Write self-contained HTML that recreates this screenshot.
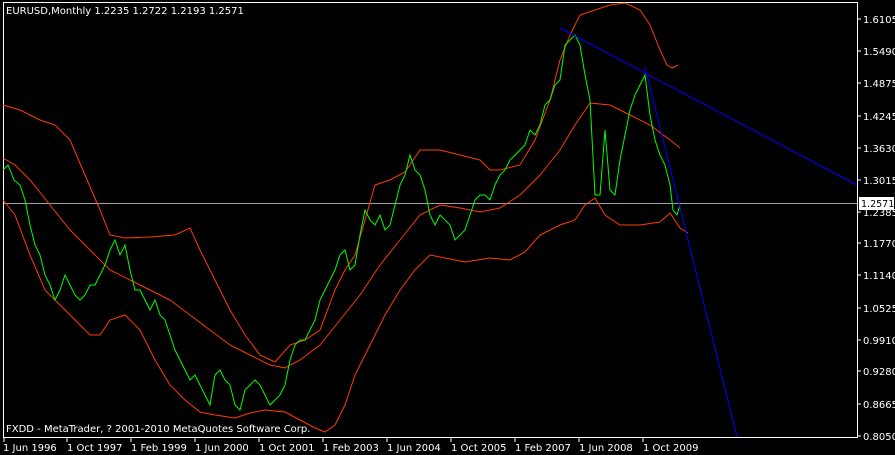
<!DOCTYPE html>
<html><head><style>
body{margin:0;background:#000;width:895px;height:455px;overflow:hidden;font-family:"Liberation Sans",sans-serif}
svg{display:block}
text{font-family:"DejaVu Sans","Liberation Sans",sans-serif;font-size:10px;fill:#fff}
</style></head><body>
<svg width="895" height="455" viewBox="0 0 895 455">
<rect x="3.5" y="2.5" width="854" height="435" fill="none" stroke="#fff"/>
<text x="6" y="14">EURUSD,Monthly  1.2235 1.2722 1.2193 1.2571</text>
<line x1="4" y1="203.5" x2="857" y2="203.5" stroke="#a0a0a8"/>
<g fill="none" stroke="#ff3c00" stroke-width="1">
<polyline points="3,158 15,165 30,180 50,205 70,230 90,250 110,270 130,280 150,290 170,300 190,315 210,330 230,345 250,355 270,365 285,368 300,360 320,345 340,320 360,295 380,265 400,240 420,215 440,205 460,208 480,212 500,208 520,195 540,175 560,150 575,125 590,103 610,105 630,115 650,125 670,140 680,148"/>
<polyline points="3,105 20,110 40,120 55,125 70,140 85,175 100,210 110,235 125,238 150,237 175,235 190,228 200,250 215,280 230,310 245,335 260,355 275,362 290,345 305,340 320,330 335,290 345,270 355,255 365,220 375,185 390,180 405,172 420,150 440,150 460,155 480,160 490,170 500,170 520,165 535,140 550,100 560,60 570,35 580,15 595,10 610,5 625,3 640,10 650,25 660,50 667,65 672,68 678,65"/>
<polyline points="3,200 15,215 30,255 45,290 60,305 75,320 90,335 100,335 110,320 125,315 140,330 155,360 170,385 185,400 200,412 215,415 235,418 250,413 265,410 285,412 300,420 315,428 325,432 335,425 345,405 355,375 370,345 385,315 400,290 415,270 430,255 445,258 465,262 490,258 510,260 525,252 540,235 560,225 575,220 585,205 595,198 605,215 620,225 640,225 660,222 670,213 680,228 688,233"/>
</g>
<polyline fill="none" stroke="#00ff00" points="3,170 8,165 14,180 20,185 25,200 30,225 35,245 40,255 45,275 50,285 55,300 60,290 65,275 70,285 75,295 80,300 85,295 90,285 95,285 100,275 105,265 110,250 115,240 120,255 125,245 130,270 135,290 140,290 145,300 150,310 155,300 160,315 165,320 170,335 175,350 180,360 185,370 190,380 195,375 200,385 205,395 210,405 215,375 220,370 225,380 230,385 235,405 240,410 245,390 250,385 255,380 260,385 265,395 270,405 275,400 280,395 285,385 290,360 295,345 300,340 305,340 310,330 315,320 320,300 325,290 330,280 335,270 340,255 345,250 350,270 355,265 360,235 365,210 370,220 375,225 380,215 385,230 390,225 395,205 400,185 405,175 410,155 415,170 420,175 425,190 430,215 435,225 440,215 445,220 450,225 455,240 460,235 465,230 470,215 475,200 480,195 485,195 490,200 495,185 500,175 505,170 510,160 515,155 520,150 525,145 530,130 535,135 540,125 545,105 550,100 555,85 560,80 565,45 570,40 575,35 580,45 585,75 590,100 595,195 600,195 605,130 610,190 615,195 620,160 625,135 630,110 635,95 640,85 645,75 650,115 655,140 660,155 665,165 670,185 673,210 677,215 680,205"/>
<g stroke="#0000ff" fill="none">
<line x1="560" y1="28" x2="857" y2="185"/>
<line x1="645" y1="67" x2="737" y2="437"/>
</g>
<text x="6" y="432">FXDD - MetaTrader, ? 2001-2010 MetaQuotes Software Corp.</text>
<g stroke="#fff">
<line x1="4" y1="437" x2="4" y2="442"/><line x1="67" y1="437" x2="67" y2="442"/><line x1="131" y1="437" x2="131" y2="442"/><line x1="195" y1="437" x2="195" y2="442"/><line x1="259" y1="437" x2="259" y2="442"/><line x1="323" y1="437" x2="323" y2="442"/><line x1="387" y1="437" x2="387" y2="442"/><line x1="451" y1="437" x2="451" y2="442"/><line x1="515" y1="437" x2="515" y2="442"/><line x1="579" y1="437" x2="579" y2="442"/><line x1="643" y1="437" x2="643" y2="442"/>
<line x1="857" y1="19" x2="861" y2="19"/><line x1="857" y1="51" x2="861" y2="51"/><line x1="857" y1="83" x2="861" y2="83"/><line x1="857" y1="116" x2="861" y2="116"/><line x1="857" y1="148" x2="861" y2="148"/><line x1="857" y1="180" x2="861" y2="180"/><line x1="857" y1="212" x2="861" y2="212"/><line x1="857" y1="243" x2="861" y2="243"/><line x1="857" y1="275" x2="861" y2="275"/><line x1="857" y1="308" x2="861" y2="308"/><line x1="857" y1="340" x2="861" y2="340"/><line x1="857" y1="371" x2="861" y2="371"/><line x1="857" y1="404" x2="861" y2="404"/><line x1="857" y1="436" x2="861" y2="436"/>
</g>
<g>
<text x="3" y="451">1 Jun 1996</text><text x="67" y="451">1 Oct 1997</text><text x="131" y="451">1 Feb 1999</text><text x="195" y="451">1 Jun 2000</text><text x="259" y="451">1 Oct 2001</text><text x="323" y="451">1 Feb 2003</text><text x="387" y="451">1 Jun 2004</text><text x="451" y="451">1 Oct 2005</text><text x="515" y="451">1 Feb 2007</text><text x="579" y="451">1 Jun 2008</text><text x="643" y="451">1 Oct 2009</text>
</g>
<g>
<text x="863" y="23">1.6105</text><text x="863" y="55">1.5490</text><text x="863" y="87">1.4875</text><text x="863" y="120">1.4245</text><text x="863" y="152">1.3630</text><text x="863" y="184">1.3015</text><text x="863" y="216">1.2385</text><text x="863" y="247">1.1770</text><text x="863" y="279">1.1140</text><text x="863" y="312">1.0525</text><text x="863" y="344">0.9910</text><text x="863" y="375">0.9280</text><text x="863" y="408">0.8665</text><text x="863" y="440">0.8050</text>
</g>
<rect x="859" y="197" width="35" height="13" fill="#fff"/>
<text x="861" y="207" style="fill:#000;font-size:9.5px">1.2571</text>
</svg>
</body></html>
